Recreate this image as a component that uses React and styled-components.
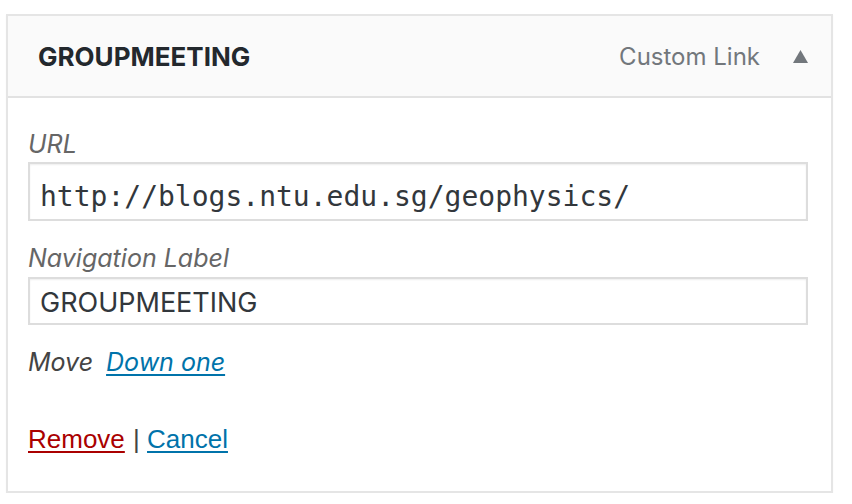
import React from "react";
import styled, { createGlobalStyle } from "styled-components";

const Global = createGlobalStyle`
  html, body { margin: 0; padding: 0; background: #ffffff; }
  body { font-family: Inter, "Noto Sans", sans-serif; }
  * { box-sizing: border-box; }
`;

const Page = styled.div`
  padding: 14px 19px 0 6px;
`;

const Item = styled.div`
  border: 2px solid #e5e5e5;
  background: #fff;
  box-shadow: 0 1px 1px rgba(0, 0, 0, 0.05);
`;

const Handle = styled.div`
  display: flex;
  align-items: center;
  height: 82px;
  padding: 0 23px 0 30px;
  background: #fafafa;
  border-bottom: 2px solid #e2e2e2;
`;

const Title = styled.span`
  flex: 1;
  font-family: Inter, sans-serif;
  font-weight: 700;
  font-size: 26px;
  color: #23282d;
`;

const ItemType = styled.span`
  font-family: Inter, sans-serif;
  font-size: 24px;
  color: #72777c;
  margin-right: 33px;
`;

const Toggle = styled.svg`
  width: 15px;
  height: 13px;
  display: block;
`;

const Settings = styled.div`
  padding: 33px 23px 37px 20px;
`;

const Field = styled.div`
  margin-top: ${(p) => p.$gap || 0}px;
`;

const Label = styled.label`
  display: block;
  font-family: Inter, sans-serif;
  font-style: italic;
  font-size: 25px;
  line-height: 26px;
  color: #666;
  margin-bottom: ${(p) => p.$below}px;
`;

const Input = styled.input`
  display: block;
  width: 100%;
  height: ${(p) => p.$h}px;
  border: 2px solid #dddddd;
  box-shadow: inset 0 1px 2px rgba(0, 0, 0, 0.07);
  padding: ${(p) => p.$pt}px 11px 0 10px;
  margin: 0;
  font-family: ${(p) => (p.$mono ? '"DejaVu Sans Mono", "Liberation Mono", monospace' : "Inter, sans-serif")};
  font-size: ${(p) => p.$size}px;
  color: #32373c;
  background: #fff;
  outline: none;
`;

const MoveRow = styled.div`
  display: flex;
  align-items: baseline;
  gap: 13px;
  margin-top: 24px;
  font-family: Inter, sans-serif;
  font-style: italic;
  font-size: 25px;
  line-height: 26px;
  color: #444;
`;

const Link = styled.a`
  color: ${(p) => (p.$danger ? "#a00" : "#0073aa")};
  text-decoration: underline;
  text-underline-offset: 3px;
  text-decoration-thickness: 2px;
  cursor: pointer;
`;

const Actions = styled.div`
  margin-top: 49px;
  font-family: "Liberation Sans", Arial, sans-serif;
  font-size: 26px;
  line-height: 30px;
  color: #444;
`;

const Sep = styled.span`
  margin: 0 0 0 1px;
`;

export default function App() {
  return (
    <>
      <Global />
      <Page>
        <Item>
          <Handle>
            <Title>GROUPMEETING</Title>
            <ItemType>Custom Link</ItemType>
            <Toggle viewBox="0 0 15 13">
              <polygon points="7.5,0 15,13 0,13" fill="#72777c" />
            </Toggle>
          </Handle>
          <Settings>
            <Field>
              <Label $below={5}>URL</Label>
              <Input $mono $h={59} $pt={9} $size={28} defaultValue="http://blogs.ntu.edu.sg/geophysics/" readOnly />
            </Field>
            <Field $gap={24}>
              <Label $below={6}>Navigation Label</Label>
              <Input $h={48} $pt={3} $size={27} defaultValue="GROUPMEETING" readOnly />
            </Field>
            <MoveRow>
              <span>Move</span>
              <Link>Down one</Link>
            </MoveRow>
            <Actions>
              <Link $danger>Remove</Link>
              <Sep> | </Sep>
              <Link>Cancel</Link>
            </Actions>
          </Settings>
        </Item>
      </Page>
    </>
  );
}
